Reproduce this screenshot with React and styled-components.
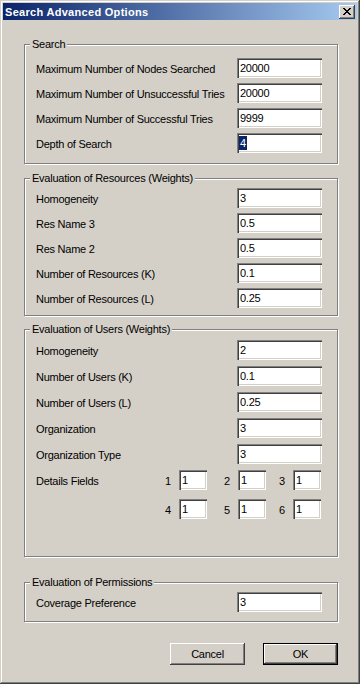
import styled, { createGlobalStyle } from 'styled-components';

const Global = createGlobalStyle`
  html, body {
    margin: 0;
    padding: 0;
    background: #d4d0c8;
  }
  * {
    box-sizing: border-box;
  }
`;

const Window = styled.div`
  width: 360px;
  height: 684px;
  padding: 3px;
  display: flex;
  flex-direction: column;
  background: #d4d0c8;
  font-family: "Liberation Sans", Arial, sans-serif;
  font-size: 11px;
  letter-spacing: -0.25px;
  color: #000;
  box-shadow:
    inset -1px -1px 0 #404040,
    inset 1px 1px 0 #d4d0c8,
    inset -2px -2px 0 #808080,
    inset 2px 2px 0 #ffffff;
`;

const TitleBar = styled.div`
  height: 17px;
  display: flex;
  align-items: center;
  justify-content: space-between;
  padding: 0 2px 0 2px;
  background: linear-gradient(to right, #0a246a, #a6caf0);
`;

const Title = styled.span`
  color: #fff;
  font-weight: bold;
  font-size: 11px;
  letter-spacing: 0.3px;
`;

const CloseBtn = styled.div`
  width: 16px;
  height: 14px;
  display: flex;
  align-items: center;
  justify-content: center;
  background: #d4d0c8;
  box-shadow:
    inset -1px -1px 0 #404040,
    inset 1px 1px 0 #ffffff,
    inset -2px -2px 0 #808080;
`;

const Content = styled.div`
  flex: 1;
  display: flex;
  flex-direction: column;
  padding: 18px 19px 0 21px;
`;

const Group = styled.fieldset`
  margin: ${p => p.$top}px 0 0 0;
  padding: ${p => p.$pt}px 15px ${p => p.$pb}px 11px;
  border: 1px solid #808080;
  box-shadow: inset 1px 1px 0 #fff, 1px 1px 0 #fff;
  display: flex;
  flex-direction: column;
  gap: ${p => p.$gap}px;
  min-width: 0;
`;

const Legend = styled.legend`
  margin-left: -6px;
  padding: 0 2px;
  line-height: 13px;
  background: #d4d0c8;
`;

const Row = styled.div`
  height: 20px;
  display: flex;
  align-items: center;
  justify-content: space-between;
`;

const Label = styled.span`
  padding-top: 2px;
`;

const Field = styled.div`
  width: ${p => p.$w || 85}px;
  height: 20px;
  padding: 2px 3px 0 3px;
  line-height: 16px;
  background: #fff;
  white-space: nowrap;
  overflow: hidden;
  box-shadow:
    inset 1px 1px 0 #808080,
    inset 2px 2px 0 #404040,
    inset -1px -1px 0 #ffffff,
    inset -2px -2px 0 #d4d0c8;
`;

const Selected = styled.span`
  background: #0a246a;
  color: #fff;
  display: inline-block;
  line-height: 14px;
  margin-left: -1px;
  padding: 0 1px;
`;

const DetailsRow = styled.div`
  display: flex;
  align-items: flex-start;
`;

const DetailsLabel = styled.span`
  width: 130px;
  height: 20px;
  line-height: 22px;
`;

const DetailsGrid = styled.div`
  display: grid;
  grid-template-columns: 59px 55px 43px;
  row-gap: 9px;
`;

const Cell = styled.div`
  display: flex;
  align-items: center;
  height: 20px;
`;

const Num = styled.span`
  width: 14px;
  padding-top: 1px;
`;

const Buttons = styled.div`
  display: flex;
  justify-content: flex-end;
  gap: 18px;
  margin-top: 21px;
`;

const Button = styled.div`
  width: 75px;
  height: 22px;
  display: flex;
  align-items: center;
  justify-content: center;
  background: #d4d0c8;
  border: ${p => (p.$default ? '1px solid #000' : 'none')};
  box-shadow:
    inset -1px -1px 0 #404040,
    inset 1px 1px 0 #ffffff,
    inset -2px -2px 0 #808080;
`;

const searchRows = [
  ['Maximum Number of Nodes Searched', '20000'],
  ['Maximum Number of Unsuccessful Tries', '20000'],
  ['Maximum Number of Successful Tries', '9999'],
];

const resourceRows = [
  ['Homogeneity', '3'],
  ['Res Name 3', '0.5'],
  ['Res Name 2', '0.5'],
  ['Number of Resources (K)', '0.1'],
  ['Number of Resources (L)', '0.25'],
];

const userRows = [
  ['Homogeneity', '2'],
  ['Number of Users (K)', '0.1'],
  ['Number of Users (L)', '0.25'],
  ['Organization', '3'],
  ['Organization Type', '3'],
];

const CloseIcon = () => (
  <svg width="8" height="7" viewBox="0 0 8 7" shapeRendering="crispEdges">
    <path d="M0 0h2l2 2.5L6 0h2L5 3.5 8 7H6L4 4.5 2 7H0l3-3.5z" fill="#000" />
  </svg>
);

export default function App() {
  return (
    <>
      <Global />
      <Window>
        <TitleBar>
          <Title>Search Advanced Options</Title>
          <CloseBtn><CloseIcon /></CloseBtn>
        </TitleBar>
        <Content>
          <Group $top={0} $pt={7} $pb={10} $gap={5}>
            <Legend>Search</Legend>
            {searchRows.map(([l, v]) => (
              <Row key={l}>
                <Label>{l}</Label>
                <Field>{v}</Field>
              </Row>
            ))}
            <Row>
              <Label>Depth of Search</Label>
              <Field><Selected>4</Selected></Field>
            </Row>
          </Group>

          <Group $top={8} $pt={3} $pb={7} $gap={5}>
            <Legend>Evaluation of Resources (Weights)</Legend>
            {resourceRows.map(([l, v]) => (
              <Row key={l}>
                <Label>{l}</Label>
                <Field>{v}</Field>
              </Row>
            ))}
          </Group>

          <Group $top={7} $pt={4} $pb={37} $gap={6}>
            <Legend>Evaluation of Users (Weights)</Legend>
            {userRows.map(([l, v]) => (
              <Row key={l}>
                <Label>{l}</Label>
                <Field>{v}</Field>
              </Row>
            ))}
            <DetailsRow>
              <DetailsLabel>Details Fields</DetailsLabel>
              <DetailsGrid>
                {[1, 2, 3, 4, 5, 6].map(n => (
                  <Cell key={n}>
                    <Num>{n}</Num>
                    <Field $w={28}>1</Field>
                  </Cell>
                ))}
              </DetailsGrid>
            </DetailsRow>
          </Group>

          <Group $top={19} $pt={3} $pb={9} $gap={5}>
            <Legend>Evaluation of Permissions</Legend>
            <Row>
              <Label>Coverage Preference</Label>
              <Field>3</Field>
            </Row>
          </Group>

          <Buttons>
            <Button>Cancel</Button>
            <Button $default>OK</Button>
          </Buttons>
        </Content>
      </Window>
    </>
  );
}
